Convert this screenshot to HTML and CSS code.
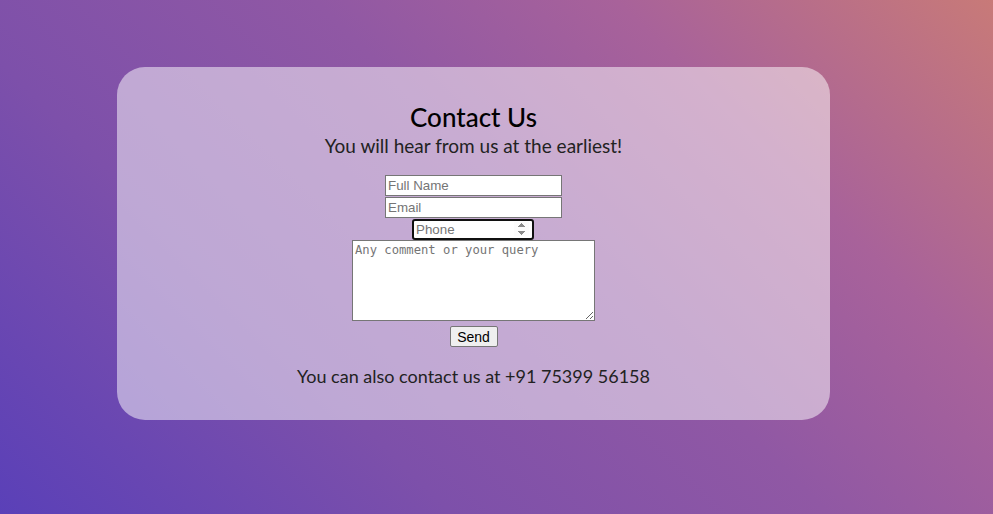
FILE: index.html
```html
<!DOCTYPE html>
<html>
<head>
<meta charset="utf-8">
<link rel="stylesheet" href="styles.css">
</head>
<body>
<main class="page">
  <section class="card">
    <h1 class="title">Contact Us</h1>
    <p class="subtitle">You will hear from us at the earliest!</p>
    <form class="form">
      <input class="field" type="text" placeholder="Full Name">
      <input class="field" type="email" placeholder="Email">
      <input class="field phone" type="number" placeholder="Phone">
      <textarea class="message" placeholder="Any comment or your query"></textarea>
      <button class="send" type="button">Send</button>
    </form>
    <p class="also">You can also contact us at +91 75399 56158</p>
  </section>
</main>
</body>
</html>
```

FILE: styles.css
```css
html, body {
  margin: 0;
  height: 100%;
}
body {
  background: linear-gradient(45deg, #5a40b8 0%, #7d50aa 30%, #9058a4 55%, #a8629a 75%, #c87a78 100%);
  font-family: Lato, "Noto Sans", sans-serif;
  color: #111;
}
.page {
  padding: 67px 0 0 117px;
}
.card {
  width: 713px;
  height: 353px;
  box-sizing: border-box;
  background: rgba(255, 255, 255, 0.5);
  border-radius: 28px;
  display: flex;
  flex-direction: column;
  align-items: center;
  padding-top: 35px;
}
.title {
  margin: 0;
  font-size: 26px;
  font-weight: 500;
  line-height: 30px;
  color: #000;
}
.subtitle {
  margin: 2px 0 0;
  font-size: 19px;
  line-height: 24px;
  color: #222;
}
.form {
  display: flex;
  flex-direction: column;
  align-items: center;
  gap: 1px;
  margin-top: 17px;
}
.field {
  width: 177px;
  height: 21px;
  box-sizing: border-box;
  font: 13.333px Arial, "Liberation Sans", sans-serif;
  padding: 1px 2px;
  border: 1px solid #767676;
  background: #fff;
  outline: none;
}
.field::placeholder,
.message::placeholder {
  color: #757575;
}
.phone {
  width: 122px;
  margin-left: -1px;
  border: 2px solid #101010;
  border-radius: 3px;
  box-shadow: inset 0 0 0 1px #fff;
  padding: 0 3px 0 2px;
}
.phone::-webkit-inner-spin-button {
  opacity: 1;
}
.message {
  width: 243px;
  height: 81px;
  box-sizing: border-box;
  font-family: "DejaVu Sans Mono", monospace;
  font-size: 12.2px;
  padding: 2px;
  border: 1px solid #767676;
  resize: both;
  margin-top: -1px;
  outline: none;
}
.send {
  margin-top: 4px;
  width: 48px;
  height: 21px;
  font: 14px Arial, "Liberation Sans", sans-serif;
  background: #efefef;
  border: 1px solid #767676;
  border-radius: 2px;
  color: #000;
  padding: 1px 6px;
}
.also {
  margin: 17px 0 0;
  font-size: 18px;
  line-height: 24px;
  color: #222;
}
```
